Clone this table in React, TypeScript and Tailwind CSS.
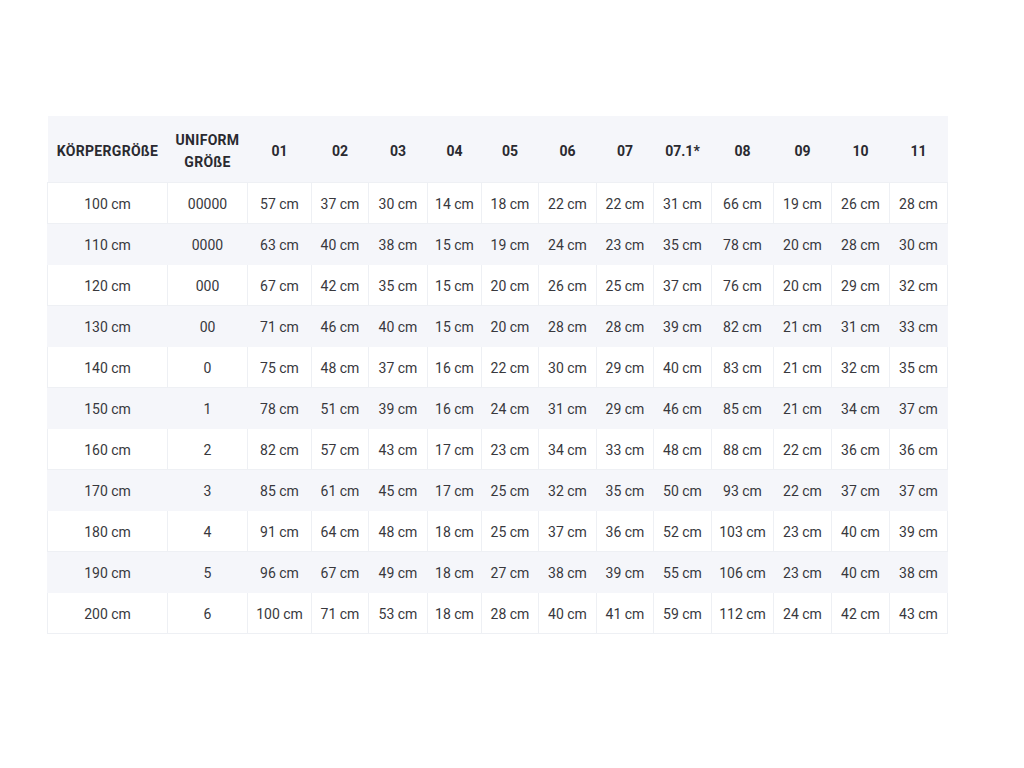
import React from "react";

const headers = ["01", "02", "03", "04", "05", "06", "07", "07.1*", "08", "09", "10", "11"];
const widths = [120, 80, 64, 57, 59, 54, 57, 58, 57, 58, 62, 58, 58, 58];

const rows: string[][] = [
  ["100 cm", "00000", "57", "37", "30", "14", "18", "22", "22", "31", "66", "19", "26", "28"],
  ["110 cm", "0000", "63", "40", "38", "15", "19", "24", "23", "35", "78", "20", "28", "30"],
  ["120 cm", "000", "67", "42", "35", "15", "20", "26", "25", "37", "76", "20", "29", "32"],
  ["130 cm", "00", "71", "46", "40", "15", "20", "28", "28", "39", "82", "21", "31", "33"],
  ["140 cm", "0", "75", "48", "37", "16", "22", "30", "29", "40", "83", "21", "32", "35"],
  ["150 cm", "1", "78", "51", "39", "16", "24", "31", "29", "46", "85", "21", "34", "37"],
  ["160 cm", "2", "82", "57", "43", "17", "23", "34", "33", "48", "88", "22", "36", "36"],
  ["170 cm", "3", "85", "61", "45", "17", "25", "32", "35", "50", "93", "22", "37", "37"],
  ["180 cm", "4", "91", "64", "48", "18", "25", "37", "36", "52", "103", "23", "40", "39"],
  ["190 cm", "5", "96", "67", "49", "18", "27", "38", "39", "55", "106", "23", "40", "38"],
  ["200 cm", "6", "100", "71", "53", "18", "28", "40", "41", "59", "112", "24", "42", "43"],
];

export default function App() {
  return (
    <div
      className="w-[1024px] h-[768px] bg-white pt-[116px] pl-[47px]"
      style={{ fontFamily: "Roboto, 'Liberation Sans', sans-serif" }}
    >
      <table className="table-fixed border-collapse w-[900px] text-[#38383d]">
        <colgroup>
          {widths.map((w, i) => (
            <col key={i} style={{ width: w }} />
          ))}
        </colgroup>
        <thead>
          <tr className="bg-[#f5f6fa] h-[66px]">
            <th className="text-[14px] tracking-[0.3px] font-bold leading-[22px] text-center text-[#2a2a30] px-0 pt-[4px]">
              KÖRPERGRÖßE
            </th>
            <th className="text-[14px] tracking-[0.3px] font-bold leading-[22px] text-center text-[#2a2a30] px-0 pt-[4px]">
              UNIFORM
              <br />
              GRÖßE
            </th>
            {headers.map((h) => (
              <th key={h} className="text-[14px] font-bold leading-[22px] text-center text-[#2a2a30] px-0 pt-[4px]">
                {h}
              </th>
            ))}
          </tr>
        </thead>
        <tbody>
          {rows.map((r, ri) => (
            <tr key={ri} className={ri % 2 === 0 ? "bg-white h-[41px]" : "bg-[#f5f6fa] h-[41px]"}>
              {r.map((c, ci) => (
                <td
                  key={ci}
                  className={
                    "text-[14px] text-center whitespace-nowrap px-0 pt-[3px] border " +
                    (ri % 2 === 0 ? "border-[#eef0f4]" : "border-[#f5f6fa]")
                  }
                >
                  {ci >= 2 ? `${c} cm` : c}
                </td>
              ))}
            </tr>
          ))}
        </tbody>
      </table>
    </div>
  );
}
